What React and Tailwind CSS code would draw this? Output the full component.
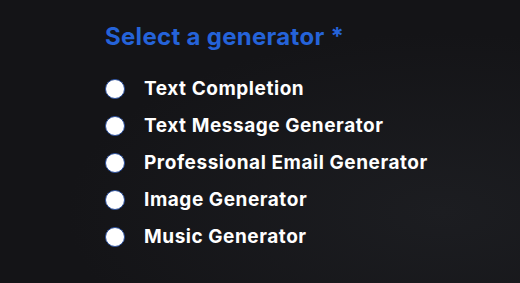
import React from 'react';

const options = [
  'Text Completion',
  'Text Message Generator',
  'Professional Email Generator',
  'Image Generator',
  'Music Generator',
];

const App = () => {
  return (
    <div className="w-[520px] h-[283px] overflow-hidden bg-[#141417] bg-[radial-gradient(ellipse_at_85%_75%,#1c1d21_0%,#141417_60%)]">
      <div className="pl-[105px] pt-[22px]" style={{ fontFamily: 'Inter, "Noto Sans", sans-serif' }}>
        <h2 className="text-[24px] leading-[30px] font-bold text-[#2563d9] tracking-[0.3px]">
          Select a generator *
        </h2>
        <div className="mt-[27px] flex flex-col gap-[17px]">
          {options.map((o) => (
            <label key={o} className="flex items-center h-[20px]">
              <span className="w-[20px] h-[20px] rounded-full bg-white border border-[#2a4f9e] shrink-0" />
              <span className="ml-[19px] text-[19px] leading-[20px] font-bold text-white tracking-[0.55px]">{o}</span>
            </label>
          ))}
        </div>
      </div>
    </div>
  );
};

export default App;
